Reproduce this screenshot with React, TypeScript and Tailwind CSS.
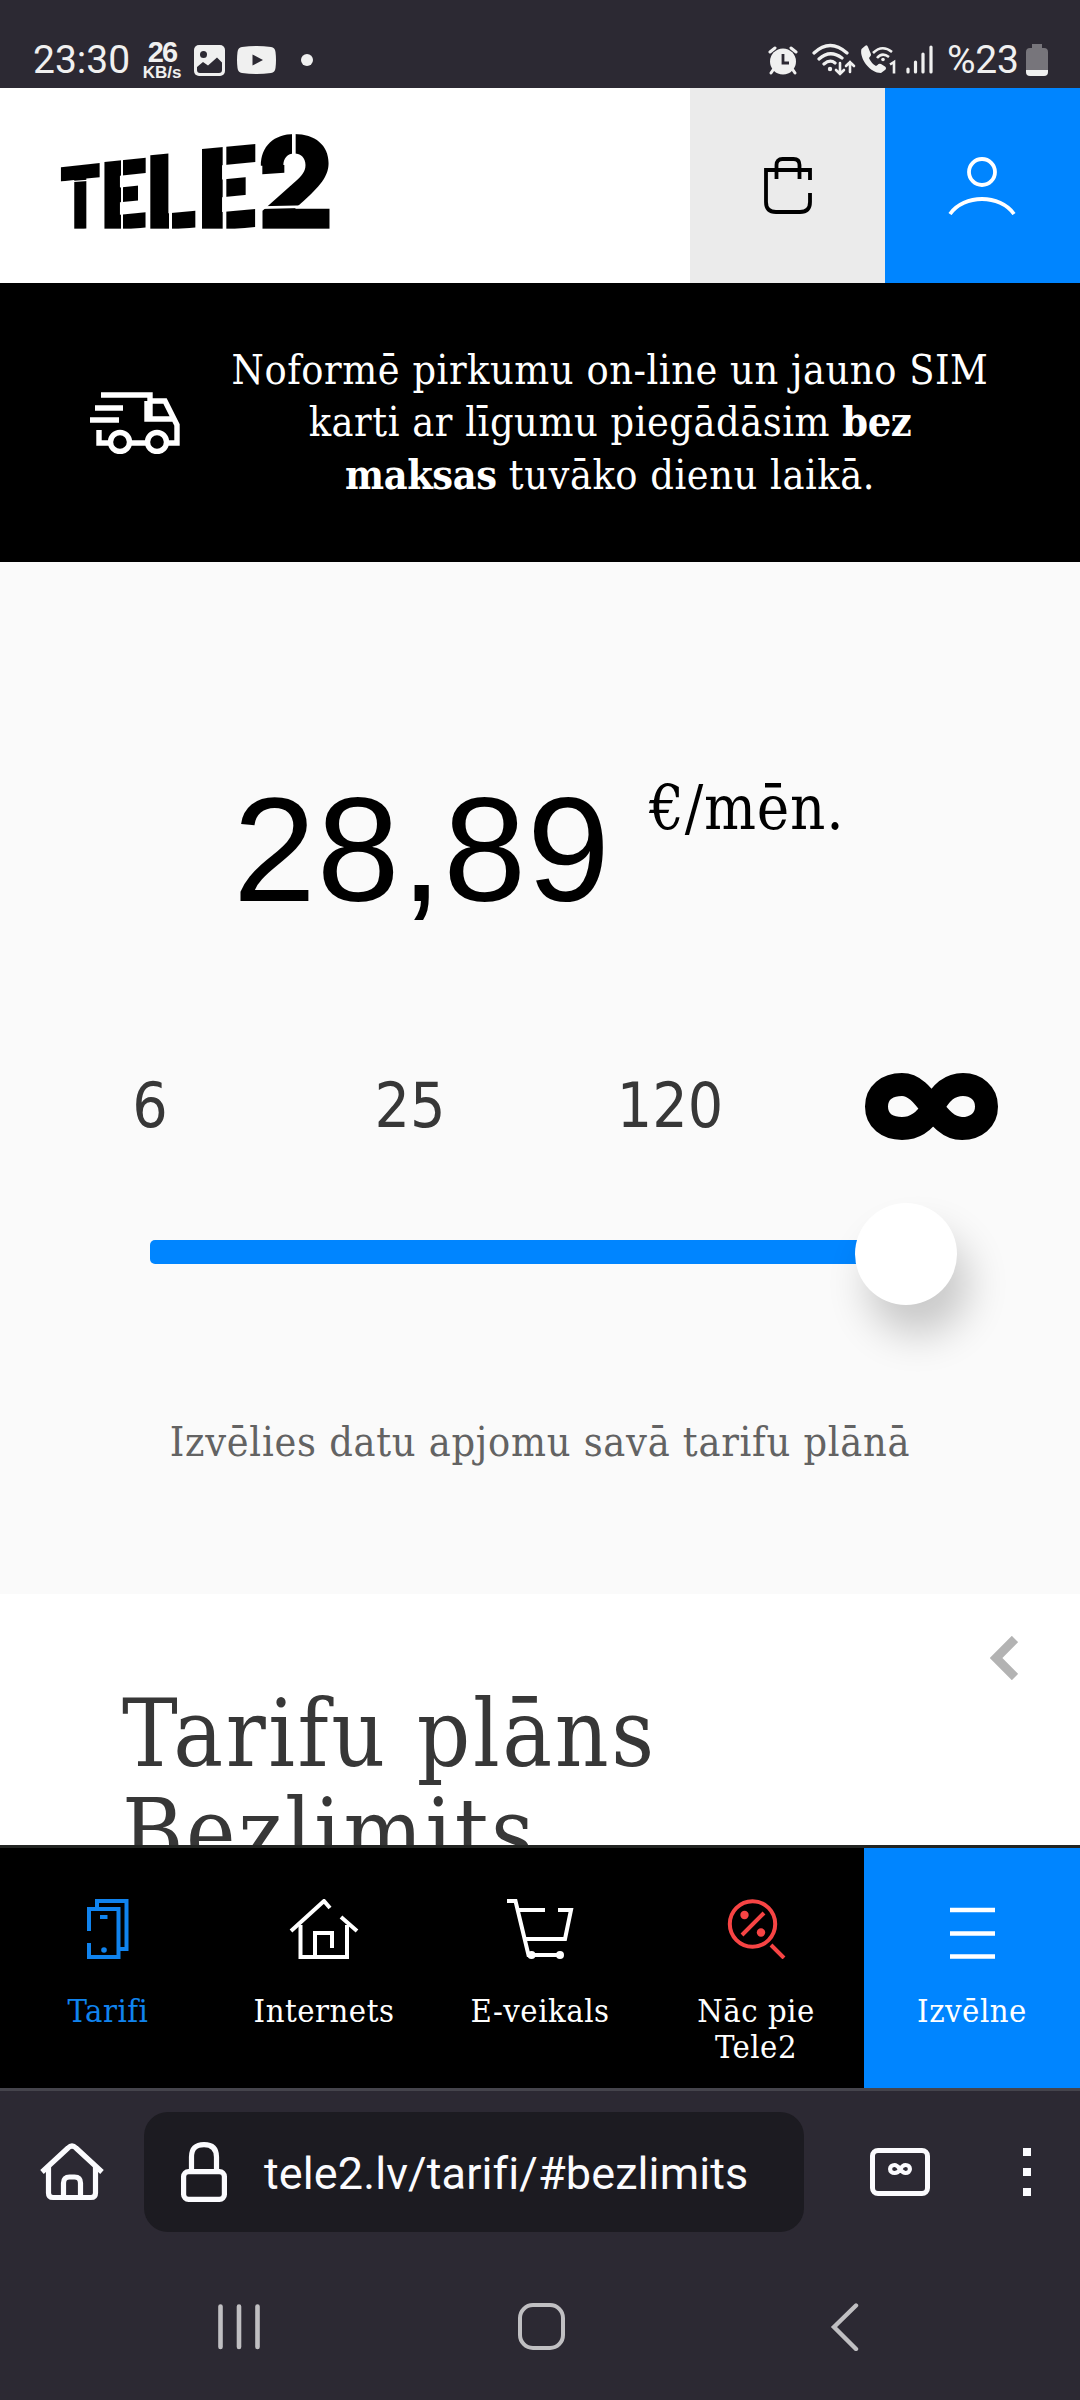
import type { ReactNode } from "react"
import clsx from "clsx"

const slab = "font-['DejaVu_Serif_Condensed','DejaVu_Serif',serif] [font-stretch:condensed]"

function StatusBar() {
  return (
    <div className="flex h-[88px] items-center bg-[#2c2933] pt-8 text-[#f0f0f0]">
      <div className="flex h-14 w-full items-center">
        <span className="ml-[33px] w-[110px] text-[39px] leading-[56px]">23:30</span>
        <div className="flex w-[38px] flex-col items-center font-['Liberation_Sans',Arial,sans-serif] font-bold">
          <span className="text-[29px] leading-[24px] tracking-[-2px]">26</span>
          <span className="text-[17px] leading-[17px]">KB/s</span>
        </div>
        <svg className="ml-[13px]" width="31" height="31" viewBox="0 0 31 31">
          <rect width="31" height="31" rx="5" fill="#f0f0f0" />
          <circle cx="9.500" cy="9.500" r="3.500" fill="#2c2933" />
          <path d="M3 22L9 17L14 20.500L23 12.500L28 17.500V25Q28 28 25 28H6Q3 28 3 25Z" fill="#2c2933" />
        </svg>
        <svg className="ml-3" width="39" height="28" viewBox="0 0 39 28">
          <path d="M5 1Q19.500-1 34 1Q38 1.500 38.500 6Q39.500 14 38.500 22Q38 26.500 34 27Q19.500 29 5 27Q1 26.500 .5 22Q-.5 14 .5 6Q1 1.500 5 1Z" fill="#f0f0f0" />
          <path d="M15.500 8.500L26 14L15.500 19.500Z" fill="#2c2933" />
        </svg>
        <span className="ml-[25px] size-3 rounded-full bg-[#f0f0f0]" />

        <svg className="ml-auto" width="30" height="29" viewBox="0 0 30 29">
          <g stroke="#f0f0f0" strokeWidth="3" strokeLinecap="round">
            <path d="M2 6L7 2M28 6L23 2M5 24L3 27M25 24L27 27" />
          </g>
          <circle cx="15" cy="15.500" r="13" fill="#f0f0f0" />
          <path d="M15 8V17H21" stroke="#2c2933" strokeWidth="2.800" fill="none" />
        </svg>
        <svg className="ml-[14px]" width="44" height="34" viewBox="0 0 44 34" fill="none" stroke="#f0f0f0" strokeWidth="3.200" strokeLinecap="round">
          <path d="M2 10Q18-5 35 10M7 16Q18 6 30 15M12 21Q18 16 23 20" />
          <circle cx="18" cy="26" r="2.200" fill="#f0f0f0" stroke="none" />
          <path d="M28 20V31M24 27L28 31L32 27M38 29V19M34 23L38 19L42 23" strokeWidth="2.600" />
        </svg>
        <svg className="ml-1" width="37" height="30" viewBox="0 0 37 30">
          <path d="M5 1L1.500 4C-1 12 9 28 21 28L25 25Q27 23 25 21.500L21 19Q19 18 17.500 20L16 21Q11 18 9 13L10.500 11Q11.500 10 10.500 8L8 2Q7-1 5 1Z" fill="#f0f0f0" />
          <path d="M13 8Q22-1 32 7M17 13Q22 7 29 12" fill="none" stroke="#f0f0f0" strokeWidth="2.600" />
          <circle cx="23" cy="14.500" r="1.800" fill="#f0f0f0" />
          <path d="M30 19.500L34 17V28.500" fill="none" stroke="#f0f0f0" strokeWidth="2.600" />
        </svg>
        <svg className="ml-[9px]" width="28" height="30" viewBox="0 0 28 30" stroke="#f0f0f0" strokeWidth="3.200" strokeLinecap="round">
          <path d="M2 24V27M9.500 17V27M17 9V27M25 2V27" />
        </svg>
        <span className="ml-[13px] w-[75px] text-[39px] leading-[56px] tracking-[-0.3px]">%23</span>
        <svg className="mr-8 ml-[4px]" width="22" height="32" viewBox="0 0 22 32">
          <path d="M6 0H16V4H18Q22 4 22 8V27H0V8Q0 4 4 4H6Z" fill="#77757b" />
          <path d="M0 26H22V28Q22 32 18 32H4Q0 32 0 28Z" fill="#f0f0f0" />
        </svg>
      </div>
    </div>
  )
}

// Stencil wordmark: heavy letters on a rising line, split by white cuts.
function Logo() {
  return (
    <svg width="320" height="150" viewBox="0 0 960 450" className="font-['Inter',sans-serif] font-black" aria-label="TELE2">
      <g fontSize="100">
        <text transform="matrix(1.84 -0.2 0 2.65 58 365)">T</text>
        <text transform="matrix(2.36 -0.24 0 2.87 182 366)">E</text>
        <text transform="matrix(2.75 -0.25 0 3.15 318 366)">L</text>
        <text transform="matrix(3.05 -0.3 0 3.43 472 368)">E</text>
        <text transform="matrix(3.6 0 0 3.85 650 356)">2</text>
      </g>
      <path d="M667 165H733V188L667 193Z" />
      <g fill="#fff">
        <rect y="356" width="960" height="30" />
        <path d="M294 200L322 197V290H294ZM617 170L652 164V285H617Z" />
      </g>
      <g stroke="#fff" fill="none">
        <path d="M60 217L185 208" strokeWidth="4" />
        <path d="M246 130V360" strokeWidth="6" />
        <path d="M391.500 120V360" strokeWidth="9" />
        <path d="M553.500 90V360" strokeWidth="11" />
        <path d="M761.500 60V140" strokeWidth="11" />
        <path d="M660 293L880 288" strokeWidth="8" />
      </g>
    </svg>
  )
}

function Header() {
  return (
    <header className="flex h-[195px] bg-white">
      <div className="flex-1 pt-[22px] pl-10">
        <Logo />
      </div>
      <button className="flex w-[195px] items-center justify-center bg-[#ebebeb]">
        <svg width="48" height="57" viewBox="0 0 48 57" fill="none" stroke="#000" strokeWidth="3.800">
          <path d="M46 23V13H2V45Q2 55 12 55H36Q46 55 46 45V36" />
          <path d="M12.500 22V8Q12.500 2 18.500 2H29.500Q35.500 2 35.500 8V22" />
        </svg>
      </button>
      <button className="flex w-[195px] items-center justify-center bg-[#0085ff] pr-0.5">
        <svg width="68" height="58" viewBox="0 0 68 58" fill="none" stroke="#fff" strokeWidth="3.800">
          <circle cx="34" cy="15" r="13" />
          <path d="M2 57C16 37 52 37 66 57" />
        </svg>
      </button>
    </header>
  )
}

function DeliveryBanner() {
  return (
    <div className="flex h-[279px] items-center bg-black text-white">
      <svg className="ml-[90px]" width="90" height="62" viewBox="0 0 90 62" fill="none" stroke="#fff" strokeWidth="5.400">
        <path d="M11 3H60V28M60 9H75L87 33V51H77M57 51H41M19 51H9V38M57 9V27H84" />
        <path d="M5 16H33M0 28H29" />
        <circle cx="30" cy="50" r="9.500" />
        <circle cx="67" cy="50" r="9.500" />
      </svg>
      <p className={clsx(slab, "ml-8 w-[796px] text-center text-[41px] leading-[52.5px] tracking-[0.55px]")}>
        Noformē pirkumu on-line un jauno SIM
        <br />
        karti ar līgumu piegādāsim <b className="tracking-[-0.4px]">bez</b>
        <br />
        <b className="tracking-[-0.4px]">maksas</b> tuvāko dienu laikā.
      </p>
    </div>
  )
}

function Infinity({ className }: { className?: string }) {
  return (
    <svg viewBox="0 0 133 67" className={className} fill="none" stroke="currentColor" strokeWidth="23">
      <path d="M67 36C60 48 50 55.500 37 55.500C22 55.500 11.500 47 11.500 33.500C11.500 20 22 11.500 37 11.500C62 11.500 70 55.500 97 55.500C111 55.500 121.500 47 121.500 33.500C121.500 20 111 11.500 98 11.500C84 11.500 75 20 67 36Z" />
    </svg>
  )
}

const volumes = ["6", "25", "120"]

function Configurator() {
  return (
    <section className="h-[1032px] bg-[#fafafa] pt-[208px]">
      <div className="flex items-start pl-[233px] text-black">
        <span className="w-[408px] font-['Liberation_Sans',Arial,sans-serif] text-[149px] leading-[160px] tracking-[1px]">28,89</span>
        <span className={clsx(slab, "mt-0.5 ml-2 text-[61px] leading-[72px] tracking-[0.8px]")}>€/mēn.</span>
      </div>
      <div className="mx-5 mt-[140px] grid h-[72px] grid-cols-4 items-center justify-items-center font-['DejaVu_Sans_Condensed','DejaVu_Sans',sans-serif] text-[62px] leading-[72px] text-[#373737] [font-stretch:condensed]">
        {volumes.map((v) => (
          <span key={v}>{v}</span>
        ))}
        <Infinity className="ml-0.5 h-[67px] w-[133px] text-black" />
      </div>
      <div className="mt-[61px] ml-[150px] flex h-[102px] items-center">
        <div className="-mt-1 h-6 w-[756px] rounded-[5px] bg-[#0085ff]" />
        <div className="-ml-[51px] size-[102px] rounded-full bg-white shadow-[12px_30px_40px_rgba(0,0,0,0.2)]" />
      </div>
      <p className={clsx(slab, "mt-[111px] text-center text-[41px] leading-[52px] tracking-[0.75px] text-[#636363]")}>
        Izvēlies datu apjomu savā tarifu plānā
      </p>
    </section>
  )
}

function PlanHeading() {
  return (
    <section className="flex h-[251px] items-start justify-between overflow-hidden bg-white pt-[42px] pr-[62px] pl-[122px]">
      <h1 className={clsx(slab, "mt-[49px] w-[600px] text-[93px] leading-[99px] tracking-[2.6px] text-[#373737]")}>
        Tarifu plāns
        <br />
        Bezlimits
      </h1>
      <svg width="28" height="44" viewBox="0 0 28 44" fill="none" stroke="#b3b3b3" strokeWidth="9">
        <path d="M25 3L6 22L25 41" />
      </svg>
    </section>
  )
}

function NavItem({ label, className, children }: { label: ReactNode; className?: string; children: ReactNode }) {
  return (
    <a className={clsx("flex w-[216px] flex-col items-center pt-[51px]", className)}>
      <svg width="72" height="60" viewBox="0 0 72 60" fill="none" stroke="currentColor" strokeWidth="4">
        {children}
      </svg>
      <span className={clsx(slab, "mt-[34px] text-center text-[32.5px] leading-9 tracking-[0.5px]")}>{label}</span>
    </a>
  )
}

function BottomNav() {
  return (
    <nav className="flex h-[243px] border-t-[3px] border-[#222422] bg-black text-white">
      <NavItem label="Tarifi" className="text-[#1083ee]">
        <path d="M17 32V10H46.500V58H17V44" />
        <path d="M25 9V2H54.500V50H47M28 18H35.500" />
        <circle cx="32" cy="51" r="2.800" fill="currentColor" stroke="none" />
      </NavItem>
      <NavItem label="Internets">
        <path d="M3 32L36 2L42 9M53 18L69 32" />
        <path d="M12.500 26V58H59V26M27 58V34H44V49" />
      </NavItem>
      <NavItem label="E-veikals">
        <path d="M3 2H11.500L24.500 56H55M15 11H41M54 11H67L61 40H20" />
        <circle cx="27.500" cy="56" r="4" fill="currentColor" stroke="none" />
        <circle cx="56" cy="56" r="4" fill="currentColor" stroke="none" />
      </NavItem>
      <NavItem
        label={
          <>
            Nāc pie
            <br />
            Tele2
          </>
        }
      >
        <g stroke="#f74444">
          <circle cx="32.500" cy="25" r="22.700" />
          <path d="M22 36L44 14M51 46L64 59" />
          <circle cx="24.500" cy="16" r="4.200" fill="#f74444" stroke="none" />
          <circle cx="41" cy="33.500" r="4.200" fill="#f74444" stroke="none" />
        </g>
      </NavItem>
      <NavItem label="Izvēlne" className="bg-[#0085ff]">
        <path d="M14 11H59M14 34.500H59M14 57.500H59" strokeWidth="4.600" />
      </NavItem>
    </nav>
  )
}

function BrowserBar() {
  return (
    <div className="h-[171px] border-t-[3px] border-[#45444c] pt-[21px] text-[#fbfbfe]">
      <div className="flex h-[120px] items-center">
        <svg className="ml-10" width="64" height="58" viewBox="0 0 64 58" fill="none" stroke="currentColor" strokeWidth="5.200">
          <path d="M2 29L28 5Q32 1 36 5L62 29" />
          <path d="M8.500 24V50Q8.500 54.500 13 54.500H51Q55.500 54.500 55.500 50V24" />
          <path d="M23.500 54V40Q23.500 34 29.500 34H34.500Q40.500 34 40.500 40V54" />
        </svg>
        <div className="ml-10 flex h-[120px] w-[660px] items-center rounded-[24px] bg-[#1c1b21]">
          <svg className="ml-[37px]" width="46" height="60" viewBox="0 0 46 60" fill="none" stroke="currentColor" strokeWidth="5.200">
            <rect x="2.600" y="29.600" width="40.800" height="27.800" rx="5" />
            <path d="M10.500 29V15Q10.500 2.600 23 2.600Q35.500 2.600 35.500 15V29" />
          </svg>
          <span className="mt-[3px] ml-[37px] text-[45px] leading-[60px] tracking-[0.1px]">tele2.lv/tarifi/#bezlimits</span>
        </div>
        <div className="ml-[66px] flex h-12 w-[60px] items-center justify-center rounded-[8px] border-[5px] border-current">
          <Infinity className="-mt-1.5 h-[14px] w-6" />
        </div>
        <div className="ml-[93px] flex flex-col gap-3">
          <i className="size-2 bg-current" />
          <i className="size-2 bg-current" />
          <i className="size-2 bg-current" />
        </div>
      </div>
    </div>
  )
}

function SystemNav() {
  return (
    <div className="flex h-[141px] items-start pt-11">
      <svg className="ml-[217px]" width="44" height="48" viewBox="0 0 44 48" stroke="#c0bfc2" strokeWidth="4.600" strokeLinecap="round">
        <path d="M3.500 3.500V44M22 3.500V44M40.500 3.500V44" />
      </svg>
      <span className="ml-[257px] size-[47px] rounded-[15px] border-[4.500px] border-[#c0bfc2]" />
      <svg className="ml-[265px]" width="30" height="48" viewBox="0 0 30 48" fill="none" stroke="#c0bfc2" strokeWidth="4.400" strokeLinecap="round">
        <path d="M26 2.500L4 24L26 46" />
      </svg>
    </div>
  )
}

export default function App() {
  return (
    <div className="h-[2400px] w-[1080px] overflow-hidden bg-[#2c2933] font-['Roboto',sans-serif]">
      <StatusBar />
      <Header />
      <DeliveryBanner />
      <Configurator />
      <PlanHeading />
      <BottomNav />
      <BrowserBar />
      <SystemNav />
    </div>
  )
}
